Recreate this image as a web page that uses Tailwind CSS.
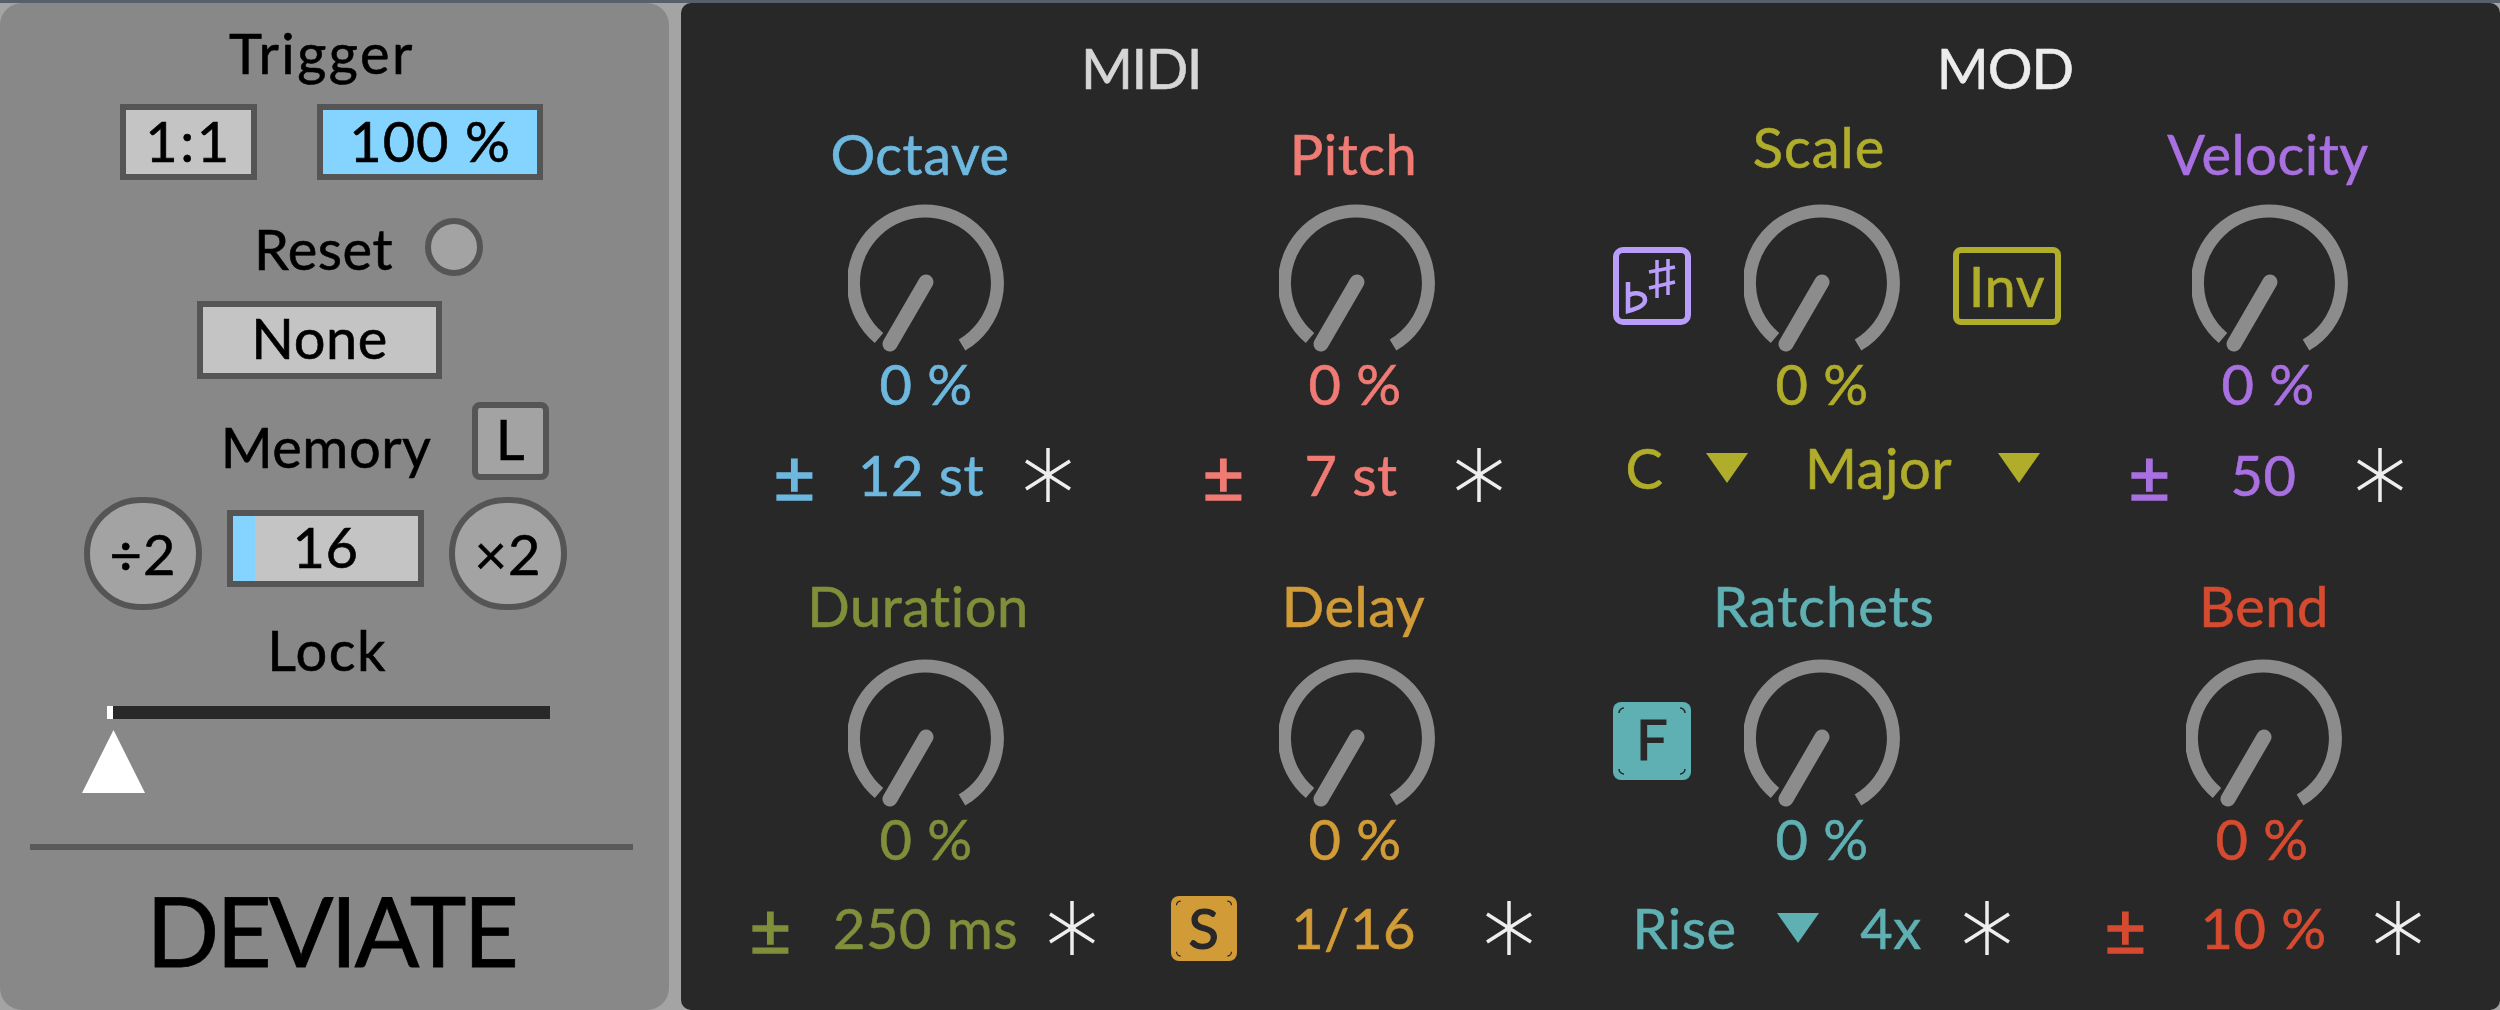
<!DOCTYPE html>
<html lang="en">
<head>
<meta charset="utf-8">
<title>Deviate</title>
<script src="https://cdn.jsdelivr.net/npm/@tailwindcss/browser@4"></script>
</head>
<body class="m-0 h-[1010px] w-[2500px] overflow-hidden bg-[#a4a4a4] font-['Lato',sans-serif] text-[56px] leading-[56px] tracking-[0.5px] [-webkit-text-stroke:0.6px]">
<svg class="hidden">
  <symbol id="knob" viewBox="0 0 156 156"><path d="M31 134A72 72 0 1 1 114 141" fill="none" stroke="#8c8c8c" stroke-width="13"/><path d="M78 78L42 140" fill="none" stroke="#8c8c8c" stroke-width="15" stroke-linecap="round"/></symbol>
  <symbol id="star" viewBox="0 0 48 54"><path d="M24 0V54M2 13L46 41M46 13L2 41" fill="none" stroke="#eeeeee" stroke-width="3.5"/></symbol>
  <symbol id="tri" viewBox="0 0 42 30"><path d="M0 0H42L21 30Z" fill="currentColor"/></symbol>
  <symbol id="corners" viewBox="0 0 78 78"><path d="M6 11A5 5 0 0 1 11 6M67 6A5 5 0 0 1 72 11M72 67A5 5 0 0 1 67 72M11 72A5 5 0 0 1 6 67" fill="none" stroke="#282828" stroke-width="1.5"/></symbol>
</svg>
<div class="h-[3px] bg-[#56606a]"></div>
<div class="flex h-[1007px]">
  <!-- left panel -->
  <section class="flex h-full w-[669px] flex-col rounded-[22px] bg-[#888888] pt-[22px] text-black">
    <div class="flex h-[56px] justify-center pr-[25px] tracking-[2.5px]">Trigger</div>
    <div class="mt-[23px] flex h-[76px] pl-[120px]">
      <div class="flex w-[137px] items-center justify-center border-[6px] border-[#555555] bg-[#c4c4c4] pb-[2px] tracking-[2.5px]">1:1</div>
      <div class="ml-[60px] flex w-[226px] items-center justify-center border-[6px] border-[#555555] bg-[#84d4ff] pb-[2px] tracking-[1px]">100 %</div>
    </div>
    <div class="mt-[38px] flex h-[58px] items-start pl-[250px]">
      <div class="mt-[3px] flex w-[147px] justify-center">Reset</div>
      <div class="ml-[28px] h-[58px] w-[58px] rounded-full border-[6px] border-[#555555] bg-[#a3a3a3]"></div>
    </div>
    <div class="mt-[25px] ml-[197px] flex h-[78px] w-[245px] items-center justify-center border-[6px] border-[#555555] bg-[#c4c4c4] pb-[5px]">None</div>
    <div class="mt-[23px] flex h-[78px] items-start pl-[225px]">
      <div class="mt-[17px] flex w-[202px] justify-center">Memory</div>
      <div class="ml-[45px] flex h-[78px] w-[77px] items-center justify-center rounded-[8px] border-[6px] border-[#555555] bg-[#a3a3a3] pb-[5px]">L</div>
    </div>
    <div class="mt-[17px] flex h-[113px] items-start pl-[84px]">
      <div class="flex h-[113px] w-[118px] items-center justify-center rounded-full border-[6px] border-[#555555] bg-[#a3a3a3] tracking-[1px]">÷2</div>
      <div class="mt-[13px] ml-[25px] flex h-[77px] w-[197px] items-center justify-center border-[6px] border-[#555555] bg-[linear-gradient(to_right,#84d4ff_22px,#c4c4c4_22px)] pb-[3px]">16</div>
      <div class="ml-[25px] flex h-[113px] w-[118px] items-center justify-center rounded-full border-[6px] border-[#555555] bg-[#a3a3a3] tracking-[1px]">×2</div>
    </div>
    <div class="mt-[12px] flex h-[56px] justify-center pr-[15px] tracking-[1.5px]">Lock</div>
    <div class="mt-[28px] ml-[107px] flex h-[13px] w-[443px]">
      <div class="w-[6px] bg-white"></div>
      <div class="flex-1 bg-[#282828]"></div>
    </div>
    <svg class="mt-[11px] ml-[82px] h-[63px] w-[63px]" viewBox="0 0 63 63"><path d="M31.5 0L63 63H0Z" fill="#ffffff"/></svg>
    <div class="mt-[51px] ml-[30px] h-[6px] w-[603px] bg-[#5a5a5a]"></div>
    <div class="mt-[32px] flex h-[96px] justify-center pr-[7px] text-[96px] leading-[96px] tracking-[-3px] [-webkit-text-stroke:0.8px]">DEVIATE</div>
  </section>

  <!-- right panel -->
  <section class="ml-[12px] h-full flex-1 rounded-[10px] bg-[#282828] pt-[37px] pl-[19px]">
    <div class="flex h-[56px]">
      <div class="flex w-[882px] justify-center tracking-[-1.5px] text-[#d6d6d6]">MIDI</div>
      <div class="flex w-[846px] justify-center tracking-[-1px] text-[#ececec]">MOD</div>
    </div>

    <!-- row 1 -->
    <div class="mt-[30px] flex">
      <div class="flex w-[452px] flex-col items-center text-[#6eb8df]">
        <div class="h-[56px] pr-[12px]">Octave</div>
        <svg class="mt-[22px] h-[156px] w-[156px]"><use href="#knob"/></svg>
        <div class="-mt-[4px] h-[56px]">0 %</div>
        <div class="mt-[35px] flex h-[56px] w-full items-center">
          <div class="ml-[76px] flex w-[37px] justify-center text-[72px] [-webkit-text-stroke:1.5px]">±</div>
          <div class="ml-[46px] flex w-[124px] justify-center whitespace-nowrap">12 st</div>
          <svg class="ml-[41px] h-[54px] w-[48px]"><use href="#star"/></svg>
        </div>
      </div>
      <div class="flex w-[406px] flex-col items-center text-[#ef7b74]">
        <div class="h-[56px] pr-[3px]">Pitch</div>
        <svg class="mt-[22px] ml-[4px] h-[156px] w-[156px]"><use href="#knob"/></svg>
        <div class="-mt-[4px] h-[56px]">0 %</div>
        <div class="mt-[35px] flex h-[56px] w-full items-center">
          <div class="ml-[53px] flex w-[37px] justify-center text-[72px] [-webkit-text-stroke:1.5px]">±</div>
          <div class="ml-[62px] flex w-[94px] justify-center whitespace-nowrap">7 st</div>
          <svg class="ml-[57px] h-[54px] w-[48px]"><use href="#star"/></svg>
        </div>
      </div>
      <div class="flex w-[528px] flex-col items-center text-[#b0ad2b]">
        <div class="-mt-[7px] mb-[7px] h-[56px] pr-[6px] tracking-[1px]">Scale</div>
        <div class="mt-[22px] flex h-[156px] w-full items-start">
          <svg class="mt-[43px] ml-[55px] h-[78px] w-[78px] shrink-0" viewBox="0 0 78 78" fill="none" stroke="#b99dfb">
            <rect x="3" y="3" width="72" height="72" rx="7" stroke-width="6"/>
            <path stroke-width="3.5" d="M44 13V51M55 12V48M36 25L62 20M36 41L62 35"/>
            <path stroke-width="4.5" d="M15 35V64C23 62 32 59 32 53C32 46 21 44 15 49"/>
          </svg>
          <svg class="ml-[53px] h-[156px] w-[156px] shrink-0"><use href="#knob"/></svg>
          <div class="mt-[43px] ml-[53px] flex h-[78px] w-[108px] shrink-0 items-center justify-center rounded-[8px] border-[6px] border-[#b0ad2b]">Inv</div>
        </div>
        <div class="-mt-[4px] h-[56px]">0 %</div>
        <div class="mt-[28px] mb-[7px] flex h-[56px] w-full items-center">
          <div class="ml-[69px] flex w-[35px] justify-center">C</div>
          <svg class="ml-[44px] h-[30px] w-[42px]"><use href="#tri"/></svg>
          <div class="ml-[59px] flex w-[143px] justify-center">Major</div>
          <svg class="ml-[48px] h-[30px] w-[42px]"><use href="#tri"/></svg>
        </div>
      </div>
      <div class="flex w-[364px] flex-col items-center text-[#a970e2]">
        <div class="h-[56px]">Velocity</div>
        <svg class="mt-[22px] ml-[4px] h-[156px] w-[156px]"><use href="#knob"/></svg>
        <div class="-mt-[4px] h-[56px]">0 %</div>
        <div class="mt-[35px] flex h-[56px] w-full items-center">
          <div class="ml-[45px] flex w-[37px] justify-center text-[72px] [-webkit-text-stroke:1.5px]">±</div>
          <div class="ml-[64px] flex w-[63px] justify-center">50</div>
          <svg class="ml-[61px] h-[54px] w-[48px]"><use href="#star"/></svg>
        </div>
      </div>
    </div>

    <!-- row 2 -->
    <div class="mt-[75px] flex">
      <div class="flex w-[452px] flex-col items-center text-[#7f8f3a]">
        <div class="h-[56px] pr-[16px]">Duration</div>
        <svg class="mt-[25px] h-[156px] w-[156px]"><use href="#knob"/></svg>
        <div class="-mt-[4px] h-[56px]">0 %</div>
        <div class="mt-[33px] flex h-[56px] w-full items-center">
          <div class="ml-[52px] flex w-[37px] justify-center text-[72px] [-webkit-text-stroke:1.5px]">±</div>
          <div class="ml-[45px] flex w-[183px] justify-center whitespace-nowrap">250 ms</div>
          <svg class="ml-[31px] h-[54px] w-[48px]"><use href="#star"/></svg>
        </div>
      </div>
      <div class="flex w-[406px] flex-col items-center text-[#d19b37]">
        <div class="h-[56px] pr-[3px]">Delay</div>
        <svg class="mt-[25px] ml-[4px] h-[156px] w-[156px]"><use href="#knob"/></svg>
        <div class="-mt-[4px] h-[56px]">0 %</div>
        <div class="mt-[33px] flex h-[56px] w-full items-center">
          <div class="relative ml-[19px] flex h-[65px] w-[66px] shrink-0 items-center justify-center rounded-[8px] bg-[#d19b37] text-[56px] text-[#282828] [-webkit-text-stroke:1.2px]">S<svg class="absolute inset-0 h-full w-full"><use href="#corners"/></svg></div>
          <div class="ml-[55px] flex w-[123px] justify-center">1/16</div>
          <svg class="ml-[70px] h-[54px] w-[48px]"><use href="#star"/></svg>
        </div>
      </div>
      <div class="flex w-[528px] flex-col items-center text-[#5fb0b3]">
        <div class="h-[56px] pl-[4px] tracking-[1px]">Ratchets</div>
        <div class="mt-[25px] flex h-[156px] w-full items-start">
          <div class="relative mt-[43px] ml-[55px] flex h-[78px] w-[78px] shrink-0 items-center justify-center rounded-[8px] bg-[#5fb0b3] pb-[4px] text-[#282828] [-webkit-text-stroke:1.2px]">F<svg class="absolute inset-0 h-full w-full"><use href="#corners"/></svg></div>
          <svg class="ml-[53px] h-[156px] w-[156px] shrink-0"><use href="#knob"/></svg>
        </div>
        <div class="-mt-[4px] h-[56px]">0 %</div>
        <div class="mt-[33px] flex h-[56px] w-full items-center">
          <div class="ml-[76px] flex w-[101px] justify-center">Rise</div>
          <svg class="ml-[42px] h-[30px] w-[42px]"><use href="#tri"/></svg>
          <div class="ml-[43px] flex w-[58px] justify-center">4x</div>
          <svg class="ml-[43px] h-[54px] w-[48px]"><use href="#star"/></svg>
        </div>
      </div>
      <div class="flex w-[364px] flex-col items-center text-[#d64b30]">
        <div class="h-[56px] pr-[8px]">Bend</div>
        <svg class="mt-[25px] mr-[8px] h-[156px] w-[156px]"><use href="#knob"/></svg>
        <div class="-mt-[4px] h-[56px] pr-[12px]">0 %</div>
        <div class="mt-[33px] flex h-[56px] w-full items-center">
          <div class="ml-[21px] flex w-[37px] justify-center text-[72px] [-webkit-text-stroke:1.5px]">±</div>
          <div class="ml-[59px] flex w-[121px] justify-center whitespace-nowrap">10 %</div>
          <svg class="ml-[50px] h-[54px] w-[48px]"><use href="#star"/></svg>
        </div>
      </div>
    </div>
  </section>
</div>
</body>
</html>
